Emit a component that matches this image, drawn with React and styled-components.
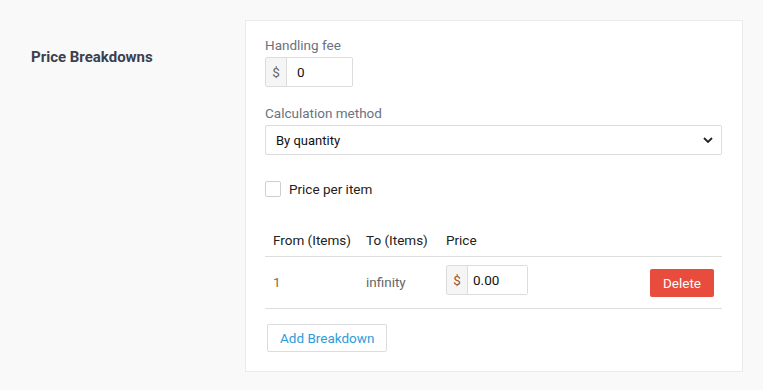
import React from 'react';
import styled, { createGlobalStyle } from 'styled-components';

const GlobalStyle = createGlobalStyle`
  body {
    margin: 0;
    background: #f9f9f9;
    font-family: Roboto, "Liberation Sans", sans-serif;
  }
`;

const Page = styled.div`
  display: flex;
  padding: 20px 0 0 31px;
`;

const SectionTitle = styled.div`
  width: 214px;
  flex-shrink: 0;
  padding-top: 28px;
  font-size: 15px;
  font-weight: 700;
  color: #3b3f4f;
`;

const Card = styled.div`
  width: 457px;
  flex-shrink: 0;
  background: #fff;
  border: 1px solid #ebebeb;
  padding: 16px 20px 19px 19px;
`;

const Label = styled.div`
  font-size: 13.5px;
  color: #6b7280;
  margin-bottom: 4px;
`;

const Field = styled.div`
  margin-bottom: ${(p) => p.$mb || 0}px;
`;

const InputGroup = styled.div`
  display: inline-flex;
  height: 30px;
  border: 1px solid #dcdcdc;
  border-radius: 2px;
  box-sizing: border-box;
`;

const Prefix = styled.span`
  display: flex;
  align-items: center;
  justify-content: center;
  width: 20px;
  background: #f5f5f5;
  border-right: 1px solid #dcdcdc;
  font-size: 13.5px;
  color: ${(p) => p.$color || '#666'};
`;

const Input = styled.input`
  box-sizing: border-box;
  width: ${(p) => p.$w}px;
  border: none;
  outline: none;
  padding: 0 ${(p) => p.$pad}px;
  font-family: inherit;
  font-size: 13.5px;
  color: #111;
  background: #fff;
`;

const SelectBox = styled.div`
  height: 30px;
  border: 1px solid #dcdcdc;
  border-radius: 2px;
  box-sizing: border-box;
  display: flex;
  align-items: center;
  padding: 0 10px;
  font-size: 13px;
  color: #111;
`;

const Chevron = styled.svg`
  margin-left: auto;
  margin-right: -2px;
`;

const CheckRow = styled.label`
  display: flex;
  align-items: center;
  gap: 8px;
  font-size: 13.5px;
  color: #222;
  margin-top: 26px;
`;

const Box = styled.span`
  width: 16px;
  height: 16px;
  box-sizing: border-box;
  border: 1px solid #cfcfcf;
  border-radius: 2px;
  background: #fff;
`;

const Table = styled.table`
  width: 100%;
  table-layout: fixed;
  margin-top: 27px;
  border-collapse: collapse;
  font-size: 13.5px;
`;

const Th = styled.th`
  box-sizing: border-box;
  text-align: left;
  font-weight: 400;
  white-space: nowrap;
  color: #222;
  padding: 0 8px;
  height: 32px;
  border-bottom: 1px solid #dedede;
  width: ${(p) => (p.$w ? p.$w + 'px' : 'auto')};
`;

const Td = styled.td`
  padding: 0 8px;
  height: 51px;
  border-bottom: 1px solid #dedede;
  color: ${(p) => p.$color || '#222'};
  text-align: ${(p) => p.$align || 'left'};
  vertical-align: middle;
`;

const PriceCell = styled.div`
  display: flex;
  margin-top: -5px;
`;

const DeleteButton = styled.button`
  width: 64px;
  height: 28px;
  border: none;
  border-radius: 2px;
  background: #e74c3c;
  color: #fff;
  font-family: inherit;
  font-size: 13.5px;
  margin-top: 1px;
`;

const AddButton = styled.button`
  margin-top: 15px;
  margin-left: 2px;
  height: 28px;
  padding: 0 12px;
  background: #fff;
  border: 1px solid #dcdcdc;
  border-radius: 2px;
  color: #2d9cdb;
  font-family: inherit;
  font-size: 13.5px;
`;

export default function App() {
  return (
    <>
      <GlobalStyle />
      <Page>
        <SectionTitle>Price Breakdowns</SectionTitle>
        <Card>
          <Field $mb={18}>
            <Label>Handling fee</Label>
            <InputGroup>
              <Prefix>$</Prefix>
              <Input $w={65} $pad={10} defaultValue="0" />
            </InputGroup>
          </Field>
          <Field>
            <Label>Calculation method</Label>
            <SelectBox>
              By quantity
              <Chevron width="10" height="6" viewBox="0 0 10 6">
                <path d="M1 1l4 4 4-4" fill="none" stroke="#222" strokeWidth="1.8" />
              </Chevron>
            </SelectBox>
          </Field>
          <CheckRow>
            <Box />
            Price per item
          </CheckRow>
          <Table>
            <thead>
              <tr>
                <Th $w={93}>From (Items)</Th>
                <Th $w={80}>To (Items)</Th>
                <Th $w={130}>Price</Th>
                <Th />
              </tr>
            </thead>
            <tbody>
              <tr>
                <Td $color="#8b6a4a">1</Td>
                <Td $color="#666">infinity</Td>
                <Td>
                  <PriceCell>
                    <InputGroup>
                      <Prefix $color="#a0522d">$</Prefix>
                      <Input $w={59} $pad={5} defaultValue="0.00" />
                    </InputGroup>
                  </PriceCell>
                </Td>
                <Td $align="right">
                  <DeleteButton>Delete</DeleteButton>
                </Td>
              </tr>
            </tbody>
          </Table>
          <AddButton>Add Breakdown</AddButton>
        </Card>
      </Page>
    </>
  );
}
